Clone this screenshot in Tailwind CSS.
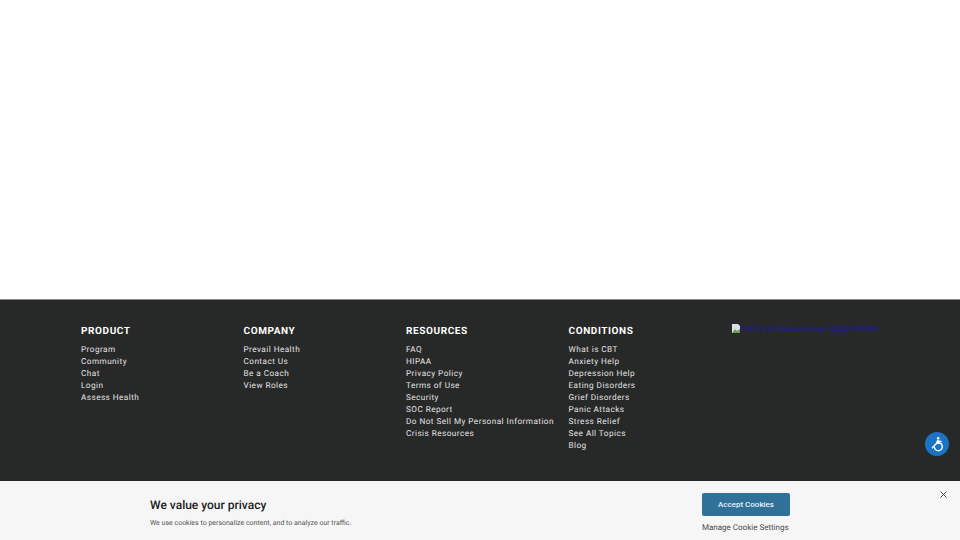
<!DOCTYPE html>
<html lang="en">
  <head>
    <meta charset="UTF-8" />
    <title>Footer</title>
    <script src="https://cdn.jsdelivr.net/npm/@tailwindcss/browser@4"></script>
  </head>
  <body class="bg-white font-['Roboto',sans-serif] overflow-hidden [text-rendering:geometricPrecision]">
    <div class="h-[540px] flex flex-col">
      <div class="h-[299px] bg-white"></div>
      <footer class="relative h-[182px] bg-[#272828] border-t border-[#8a8a8a] pl-[81px] pt-[24px]">
        <div class="grid grid-cols-[162.5px_162.5px_162.5px_163px_auto]">
          <div>
            <h4 class="mt-[1px] text-[10px] leading-[13px] font-bold tracking-[0.6px] text-white mb-[6px]">PRODUCT</h4>
            <ul class="text-[8.2px] leading-[12px] tracking-[0.45px] text-[#e4e4e4]">
              <li>Program</li>
              <li>Community</li>
              <li>Chat</li>
              <li>Login</li>
              <li>Assess Health</li>
            </ul>
          </div>
          <div>
            <h4 class="mt-[1px] text-[10px] leading-[13px] font-bold tracking-[0.6px] text-white mb-[6px]">COMPANY</h4>
            <ul class="text-[8.2px] leading-[12px] tracking-[0.45px] text-[#e4e4e4]">
              <li>Prevail Health</li>
              <li>Contact Us</li>
              <li>Be a Coach</li>
              <li>View Roles</li>
            </ul>
          </div>
          <div>
            <h4 class="mt-[1px] text-[10px] leading-[13px] font-bold tracking-[0.6px] text-white mb-[6px]">RESOURCES</h4>
            <ul class="text-[8.2px] leading-[12px] tracking-[0.45px] text-[#e4e4e4]">
              <li>FAQ</li>
              <li>HIPAA</li>
              <li>Privacy Policy</li>
              <li>Terms of Use</li>
              <li>Security</li>
              <li>SOC Report</li>
              <li class="whitespace-nowrap">Do Not Sell My Personal Information</li>
              <li>Crisis Resources</li>
            </ul>
          </div>
          <div>
            <h4 class="mt-[1px] text-[10px] leading-[13px] font-bold tracking-[0.6px] text-white mb-[6px]">CONDITIONS</h4>
            <ul class="text-[8.2px] leading-[12px] tracking-[0.45px] text-[#e4e4e4]">
              <li>What is CBT</li>
              <li>Anxiety Help</li>
              <li>Depression Help</li>
              <li>Eating Disorders</li>
              <li>Grief Disorders</li>
              <li>Panic Attacks</li>
              <li>Stress Relief</li>
              <li>See All Topics</li>
              <li>Blog</li>
            </ul>
          </div>
          <a class="flex items-start text-[7.5px] leading-[10px] text-[#1a1ab0]">
            <svg class="w-[8px] h-[9px] shrink-0" viewBox="0 0 8 9">
              <path d="M0 0h6l2 2v7H0z" fill="#d8dfe8" />
              <path d="M0 9l3-4 2 2 3-2v4z" fill="#6f9f4a" />
            </svg>
            <span class="whitespace-nowrap">51875 312 aicpa-soc-logo 202204180949</span>
          </a>
        </div>
        <div class="absolute right-[11px] top-[132px] w-[24px] h-[24px] rounded-full bg-[#1c72c4] flex items-center justify-center">
          <svg class="w-[18px] h-[18px]" viewBox="0 0 18 18" fill="none" stroke="white" stroke-width="1.4" stroke-linecap="round" stroke-linejoin="round">
            <circle cx="10.2" cy="3.2" r="1.3" fill="white" stroke="none" />
            <path d="M9.8 5.4L8.4 8.6 4.4 12.8" />
            <path d="M9.6 6.2l3.4.2" />
            <path d="M8.6 8.2l4.6.2" />
            <path d="M9.4 7.8a4 4 0 1 1-3 4.6" />
          </svg>
        </div>
      </footer>
      <div class="relative flex-1 bg-[#f6f6f6] pl-[150px] pr-[170px] flex justify-between">
        <div class="pt-[17px]">
          <h2 class="text-[12px] leading-[14px] font-medium text-[#1c1c1c]">We value your privacy</h2>
          <p class="mt-[6px] text-[7px] leading-[10px] text-[#555555] whitespace-nowrap">We use cookies to personalize content, and to analyze our traffic.</p>
        </div>
        <div class="pt-[12px] w-[88px] shrink-0">
          <button class="block w-[88px] h-[23px] rounded-[2px] bg-[#2f7198] text-[8px] font-medium text-[#e6f2fa]">Accept Cookies</button>
          <p class="mt-[6px] text-[8px] leading-[11px] whitespace-nowrap text-[#4a4a4a]">Manage Cookie Settings</p>
        </div>
        <svg class="absolute right-[13px] top-[10px] w-[7px] h-[7px]" viewBox="0 0 7 7" stroke="#444444" stroke-width="1">
          <path d="M0.5 0.5l6 6M6.5 0.5l-6 6" />
        </svg>
      </div>
    </div>
  </body>
</html>
